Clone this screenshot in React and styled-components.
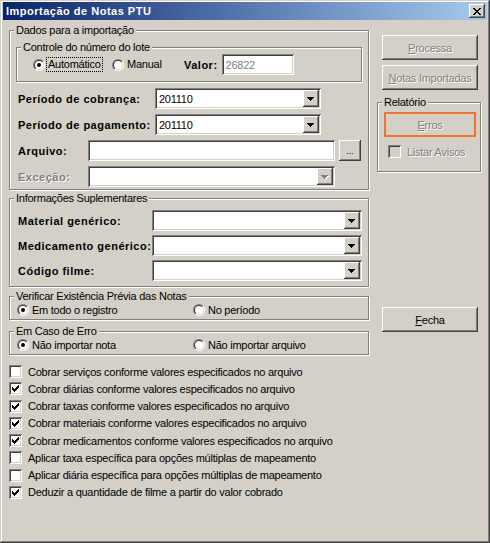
import React, { useId } from 'react';
import styled, { createGlobalStyle, css } from 'styled-components';

const FACE = '#D4D0C8';
const SHADOW = '#808080';
const DARK = '#404040';

const GlobalStyle = createGlobalStyle`
  html, body { margin: 0; padding: 0; background: ${FACE}; }
  body { font-family: "Liberation Sans", Arial, sans-serif; font-size: 11px; color: #000; }
  * { box-sizing: border-box; }
`;

const raised = css`
  box-shadow: inset -1px -1px ${DARK}, inset 1px 1px #fff, inset -2px -2px ${SHADOW}, inset 2px 2px ${FACE};
`;
const sunken = css`
  box-shadow: inset 1px 1px ${SHADOW}, inset -1px -1px #fff, inset 2px 2px ${DARK}, inset -2px -2px ${FACE};
`;
const regularText = css`
  font-family: "Liberation Sans", Arial, sans-serif;
  font-size: 11px;
  letter-spacing: -0.25px;
  white-space: nowrap;
`;
const disabledText = css`
  color: ${SHADOW};
  text-shadow: 1px 1px #fff;
`;

const Window = styled.div`
  width: 490px;
  height: 543px;
  background: ${FACE};
  padding: 2px 3px 3px 3px;
  box-shadow: inset -1px -1px ${DARK}, inset 1px 1px ${FACE}, inset -2px -2px ${SHADOW}, inset 2px 2px #fff;
  display: flex;
  flex-direction: column;
  overflow: hidden;
`;

const TitleBar = styled.div`
  height: 18px;
  flex-shrink: 0;
  display: flex;
  align-items: center;
  justify-content: space-between;
  padding: 0 2px 0 3px;
  background: linear-gradient(to right, #0a246a, #a6caf0);
`;

const Title = styled.span`
  color: #fff;
  font-weight: bold;
  font-size: 11px;
  letter-spacing: 0.5px;
  white-space: nowrap;
`;

const CloseButton = styled.div`
  width: 16px;
  height: 14px;
  background: ${FACE};
  ${raised};
  display: flex;
  align-items: center;
  justify-content: center;
  padding-right: 1px;
`;

const Client = styled.div`
  flex: 1;
  display: flex;
  flex-direction: column;
  padding-left: 6px;
`;

const Top = styled.div`
  display: flex;
  align-items: flex-start;
`;

const LeftCol = styled.div`
  width: 360px;
  display: flex;
  flex-direction: column;
  padding-top: 10px;
`;

const RightCol = styled.div`
  width: 104px;
  margin-left: 8px;
  display: flex;
  flex-direction: column;
  padding-top: 15px;
`;

const Group = styled.div`
  position: relative;
  border: 1px solid ${SHADOW};
  box-shadow: inset 1px 1px #fff, 1px 1px #fff;
  margin-top: ${(p) => p.$mt || 0}px;
  padding: ${(p) => p.$pad};
  flex-shrink: 0;
`;

const Legend = styled.span`
  position: absolute;
  top: -7px;
  left: 4px;
  padding: 0 2px;
  line-height: 13px;
  background: ${FACE};
  ${regularText};
`;

const Row = styled.div`
  display: flex;
  align-items: center;
  height: ${(p) => p.$h || 21}px;
`;

const Fields = styled.div`
  display: flex;
  flex-direction: column;
  gap: ${(p) => p.$gap}px;
  margin-top: ${(p) => p.$mt || 0}px;
`;

const FieldRow = styled.div`
  display: flex;
  align-items: center;
  height: 21px;
  padding-left: 2px;
`;

const FieldLabel = styled.span`
  width: ${(p) => p.$w}px;
  flex-shrink: 0;
  font-weight: bold;
  font-size: 11px;
  letter-spacing: 0.5px;
  white-space: nowrap;
  overflow: visible;
  ${(p) => p.$disabled && disabledText};
`;

const InlineLabel = styled.span`
  font-weight: bold;
  font-size: 11px;
  letter-spacing: 0.5px;
  white-space: nowrap;
  margin-right: 4px;
`;

const Edit = styled.div`
  width: ${(p) => p.$w}px;
  height: 21px;
  flex-shrink: 0;
  background: #fff;
  ${sunken};
  display: flex;
  align-items: center;
  padding: 2px 4px;
  ${regularText};
  color: ${(p) => (p.$grey ? SHADOW : '#000')};
`;

const ComboBox = styled.div`
  width: ${(p) => p.$w}px;
  height: 21px;
  flex-shrink: 0;
  background: #fff;
  ${sunken};
  display: flex;
  align-items: center;
  padding: 2px;
`;

const ComboText = styled.span`
  flex: 1;
  padding-left: 2px;
  ${regularText};
`;

const DropButton = styled.span`
  width: 16px;
  height: 17px;
  background: ${FACE};
  ${raised};
  display: flex;
  align-items: center;
  justify-content: center;
  padding-top: 1px;
`;

const SmallButton = styled.div`
  width: 22px;
  height: 21px;
  margin-left: 4px;
  background: ${FACE};
  ${raised};
  display: flex;
  align-items: flex-end;
  justify-content: center;
  padding-bottom: 5px;
  ${regularText};
  letter-spacing: 0;
  font-size: 9px;
  line-height: 9px;
`;

const RadioOption = styled.div`
  width: ${(p) => (p.$w ? `${p.$w}px` : 'auto')};
  flex-shrink: 0;
  display: flex;
  align-items: center;
`;

const RadioText = styled.span`
  margin-left: 1px;
  padding: 0 1px;
  border: 1px dotted ${(p) => (p.$focus ? '#000' : 'transparent')};
  line-height: 13px;
  ${regularText};
`;

const Button = styled.div`
  width: ${(p) => p.$w || 96}px;
  height: 25px;
  margin-left: ${(p) => p.$ml ?? 5}px;
  margin-top: ${(p) => p.$mt || 0}px;
  flex-shrink: 0;
  background: ${FACE};
  display: flex;
  align-items: center;
  justify-content: center;
  ${regularText};
  ${(p) => (p.$hot ? css`border: 2px solid #ee7430;` : raised)};
  ${(p) => p.$disabled && disabledText};
  u { text-underline-offset: 1px; }
`;

const CheckRow = styled.div`
  display: flex;
  align-items: center;
  height: ${(p) => p.$h || 17.25}px;
  margin-left: ${(p) => p.$ml || 0}px;
  margin-top: ${(p) => p.$mt || 0}px;
`;

const CheckBox = styled.span`
  width: 13px;
  height: 13px;
  flex-shrink: 0;
  background: ${(p) => (p.$disabled ? FACE : '#fff')};
  ${sunken};
  display: flex;
  align-items: center;
  justify-content: center;
`;

const CheckText = styled.span`
  margin-left: 6px;
  ${regularText};
  ${(p) => p.$disabled && disabledText};
`;

const CheckList = styled.div`
  display: flex;
  flex-direction: column;
  margin-top: 8px;
`;

function CloseGlyph() {
  const rows = ['##....##', '.##..##.', '..####..', '...##...', '..####..', '.##..##.', '##....##'];
  return (
    <svg width="8" height="7" viewBox="0 0 8 7" shapeRendering="crispEdges">
      {rows.flatMap((r, y) =>
        r.split('').map((c, x) => (c === '#' ? <rect key={`${x}-${y}`} x={x} y={y} width="1" height="1" fill="#000" /> : null))
      )}
    </svg>
  );
}

function Arrow({ disabled }) {
  const color = disabled ? SHADOW : '#000';
  return (
    <svg width="8" height="5" viewBox="0 0 8 5" shapeRendering="crispEdges">
      {disabled && (
        <g fill="#fff">
          <rect x="1" y="1" width="7" height="1" />
          <rect x="2" y="2" width="5" height="1" />
          <rect x="3" y="3" width="3" height="1" />
          <rect x="4" y="4" width="1" height="1" />
        </g>
      )}
      <g fill={color}>
        <rect x="0" y="0" width="7" height="1" />
        <rect x="1" y="1" width="5" height="1" />
        <rect x="2" y="2" width="3" height="1" />
        <rect x="3" y="3" width="1" height="1" />
      </g>
    </svg>
  );
}

function CheckMark() {
  const cols = [2, 3, 4, 3, 2, 1, 0];
  return (
    <svg width="7" height="7" viewBox="0 0 7 7" shapeRendering="crispEdges">
      {cols.map((y, x) => (
        <rect key={x} x={x} y={y} width="1" height="3" fill="#000" />
      ))}
    </svg>
  );
}

function RadioGlyph({ checked }) {
  const raw = useId();
  const id = 'r' + raw.replace(/[^a-zA-Z0-9]/g, '');
  return (
    <svg width="12" height="12" viewBox="0 0 12 12" style={{ flexShrink: 0 }}>
      <defs>
        <linearGradient id={id + 'o'} x1="0" y1="0" x2="1" y2="1">
          <stop offset="0.5" stopColor={SHADOW} />
          <stop offset="0.5" stopColor="#fff" />
        </linearGradient>
        <linearGradient id={id + 'i'} x1="0" y1="0" x2="1" y2="1">
          <stop offset="0.5" stopColor={DARK} />
          <stop offset="0.5" stopColor={FACE} />
        </linearGradient>
      </defs>
      <circle cx="6" cy="6" r="6" fill={`url(#${id}o)`} />
      <circle cx="6" cy="6" r="5" fill={`url(#${id}i)`} />
      <circle cx="6" cy="6" r="4" fill="#fff" />
      {checked && <circle cx="6" cy="6" r="2" fill="#000" />}
    </svg>
  );
}

function Radio({ checked, focus, width, children }) {
  return (
    <RadioOption $w={width}>
      <RadioGlyph checked={checked} />
      <RadioText $focus={focus}>{children}</RadioText>
    </RadioOption>
  );
}

function Combo({ width, value, disabled }) {
  return (
    <ComboBox $w={width}>
      <ComboText>{value}</ComboText>
      <DropButton>
        <Arrow disabled={disabled} />
      </DropButton>
    </ComboBox>
  );
}

function Check({ checked, disabled, children, ...rest }) {
  return (
    <CheckRow {...rest}>
      <CheckBox $disabled={disabled}>{checked && <CheckMark />}</CheckBox>
      <CheckText $disabled={disabled}>{children}</CheckText>
    </CheckRow>
  );
}

const options = [
  ['Cobrar serviços conforme valores especificados no arquivo', false],
  ['Cobrar diárias conforme valores especificados no arquivo', true],
  ['Cobrar taxas conforme valores especificados no arquivo', true],
  ['Cobrar materiais conforme valores especificados no arquivo', true],
  ['Cobrar medicamentos conforme valores especificados no arquivo', true],
  ['Aplicar taxa específica para opções múltiplas de mapeamento', false],
  ['Aplicar diária específica para opções múltiplas de mapeamento', false],
  ['Deduzir a quantidade de filme a partir do valor cobrado', true],
];

export default function App() {
  return (
    <>
      <GlobalStyle />
      <Window>
        <TitleBar>
          <Title>Importação de Notas PTU</Title>
          <CloseButton>
            <CloseGlyph />
          </CloseButton>
        </TitleBar>
        <Client>
          <Top>
            <LeftCol>
              <Group $pad="16px 6px 2px 6px">
                <Legend>Dados para a importação</Legend>
                <Group $pad="6px 0 6px 16px">
                  <Legend>Controle do número do lote</Legend>
                  <Row>
                    <Radio checked focus width={79}>Automático</Radio>
                    <Radio width={72}>Manual</Radio>
                    <InlineLabel>Valor:</InlineLabel>
                    <Edit $w={72} $grey>26822</Edit>
                  </Row>
                </Group>
                <Fields $gap={5} $mt={6}>
                  <FieldRow>
                    <FieldLabel $w={137}>Período de cobrança:</FieldLabel>
                    <Combo width={166} value="201110" />
                  </FieldRow>
                  <FieldRow>
                    <FieldLabel $w={137}>Período de pagamento:</FieldLabel>
                    <Combo width={166} value="201110" />
                  </FieldRow>
                  <FieldRow>
                    <FieldLabel $w={70}>Arquivo:</FieldLabel>
                    <Edit $w={247} />
                    <SmallButton>...</SmallButton>
                  </FieldRow>
                  <FieldRow>
                    <FieldLabel $w={70} $disabled>Exceção:</FieldLabel>
                    <Combo width={247} disabled />
                  </FieldRow>
                </Fields>
              </Group>

              <Group $mt={8} $pad="11px 6px 5px 6px">
                <Legend>Informações Suplementares</Legend>
                <Fields $gap={4}>
                  <FieldRow>
                    <FieldLabel $w={134}>Material genérico:</FieldLabel>
                    <Combo width={210} />
                  </FieldRow>
                  <FieldRow>
                    <FieldLabel $w={134}>Medicamento genérico:</FieldLabel>
                    <Combo width={210} />
                  </FieldRow>
                  <FieldRow>
                    <FieldLabel $w={134}>Código filme:</FieldLabel>
                    <Combo width={210} />
                  </FieldRow>
                </Fields>
              </Group>

              <Group $mt={9} $pad="6px 0 2px 7px">
                <Legend>Verificar Existência Prévia das Notas</Legend>
                <Row $h={14}>
                  <Radio checked width={176}>Em todo o registro</Radio>
                  <Radio>No período</Radio>
                </Row>
              </Group>

              <Group $mt={11} $pad="6px 0 2px 7px">
                <Legend>Em Caso de Erro</Legend>
                <Row $h={14}>
                  <Radio checked width={176}>Não importar nota</Radio>
                  <Radio>Não importar arquivo</Radio>
                </Row>
              </Group>
            </LeftCol>

            <RightCol>
              <Button $disabled>
                <span>
                  <u>P</u>rocessa
                </span>
              </Button>
              <Button $disabled $mt={5}>
                <span>
                  <u>N</u>otas Importadas
                </span>
              </Button>
              <Group $mt={12} $pad="9px 0 0 6px">
                <Legend>Relatório</Legend>
                <Button $hot $disabled $ml={0} $w={92}>
                  <span>
                    <u>E</u>rros
                  </span>
                </Button>
                <Check disabled $h={13} $ml={4} $mt={8}>
                  Listar Avisos
                </Check>
                <div style={{ height: 13 }} />
              </Group>
              <Button $mt={135}>
                <span>
                  <u>F</u>echa
                </span>
              </Button>
            </RightCol>
          </Top>

          <CheckList>
            {options.map(([label, checked]) => (
              <Check key={label} checked={checked}>
                {label}
              </Check>
            ))}
          </CheckList>
        </Client>
      </Window>
    </>
  );
}
